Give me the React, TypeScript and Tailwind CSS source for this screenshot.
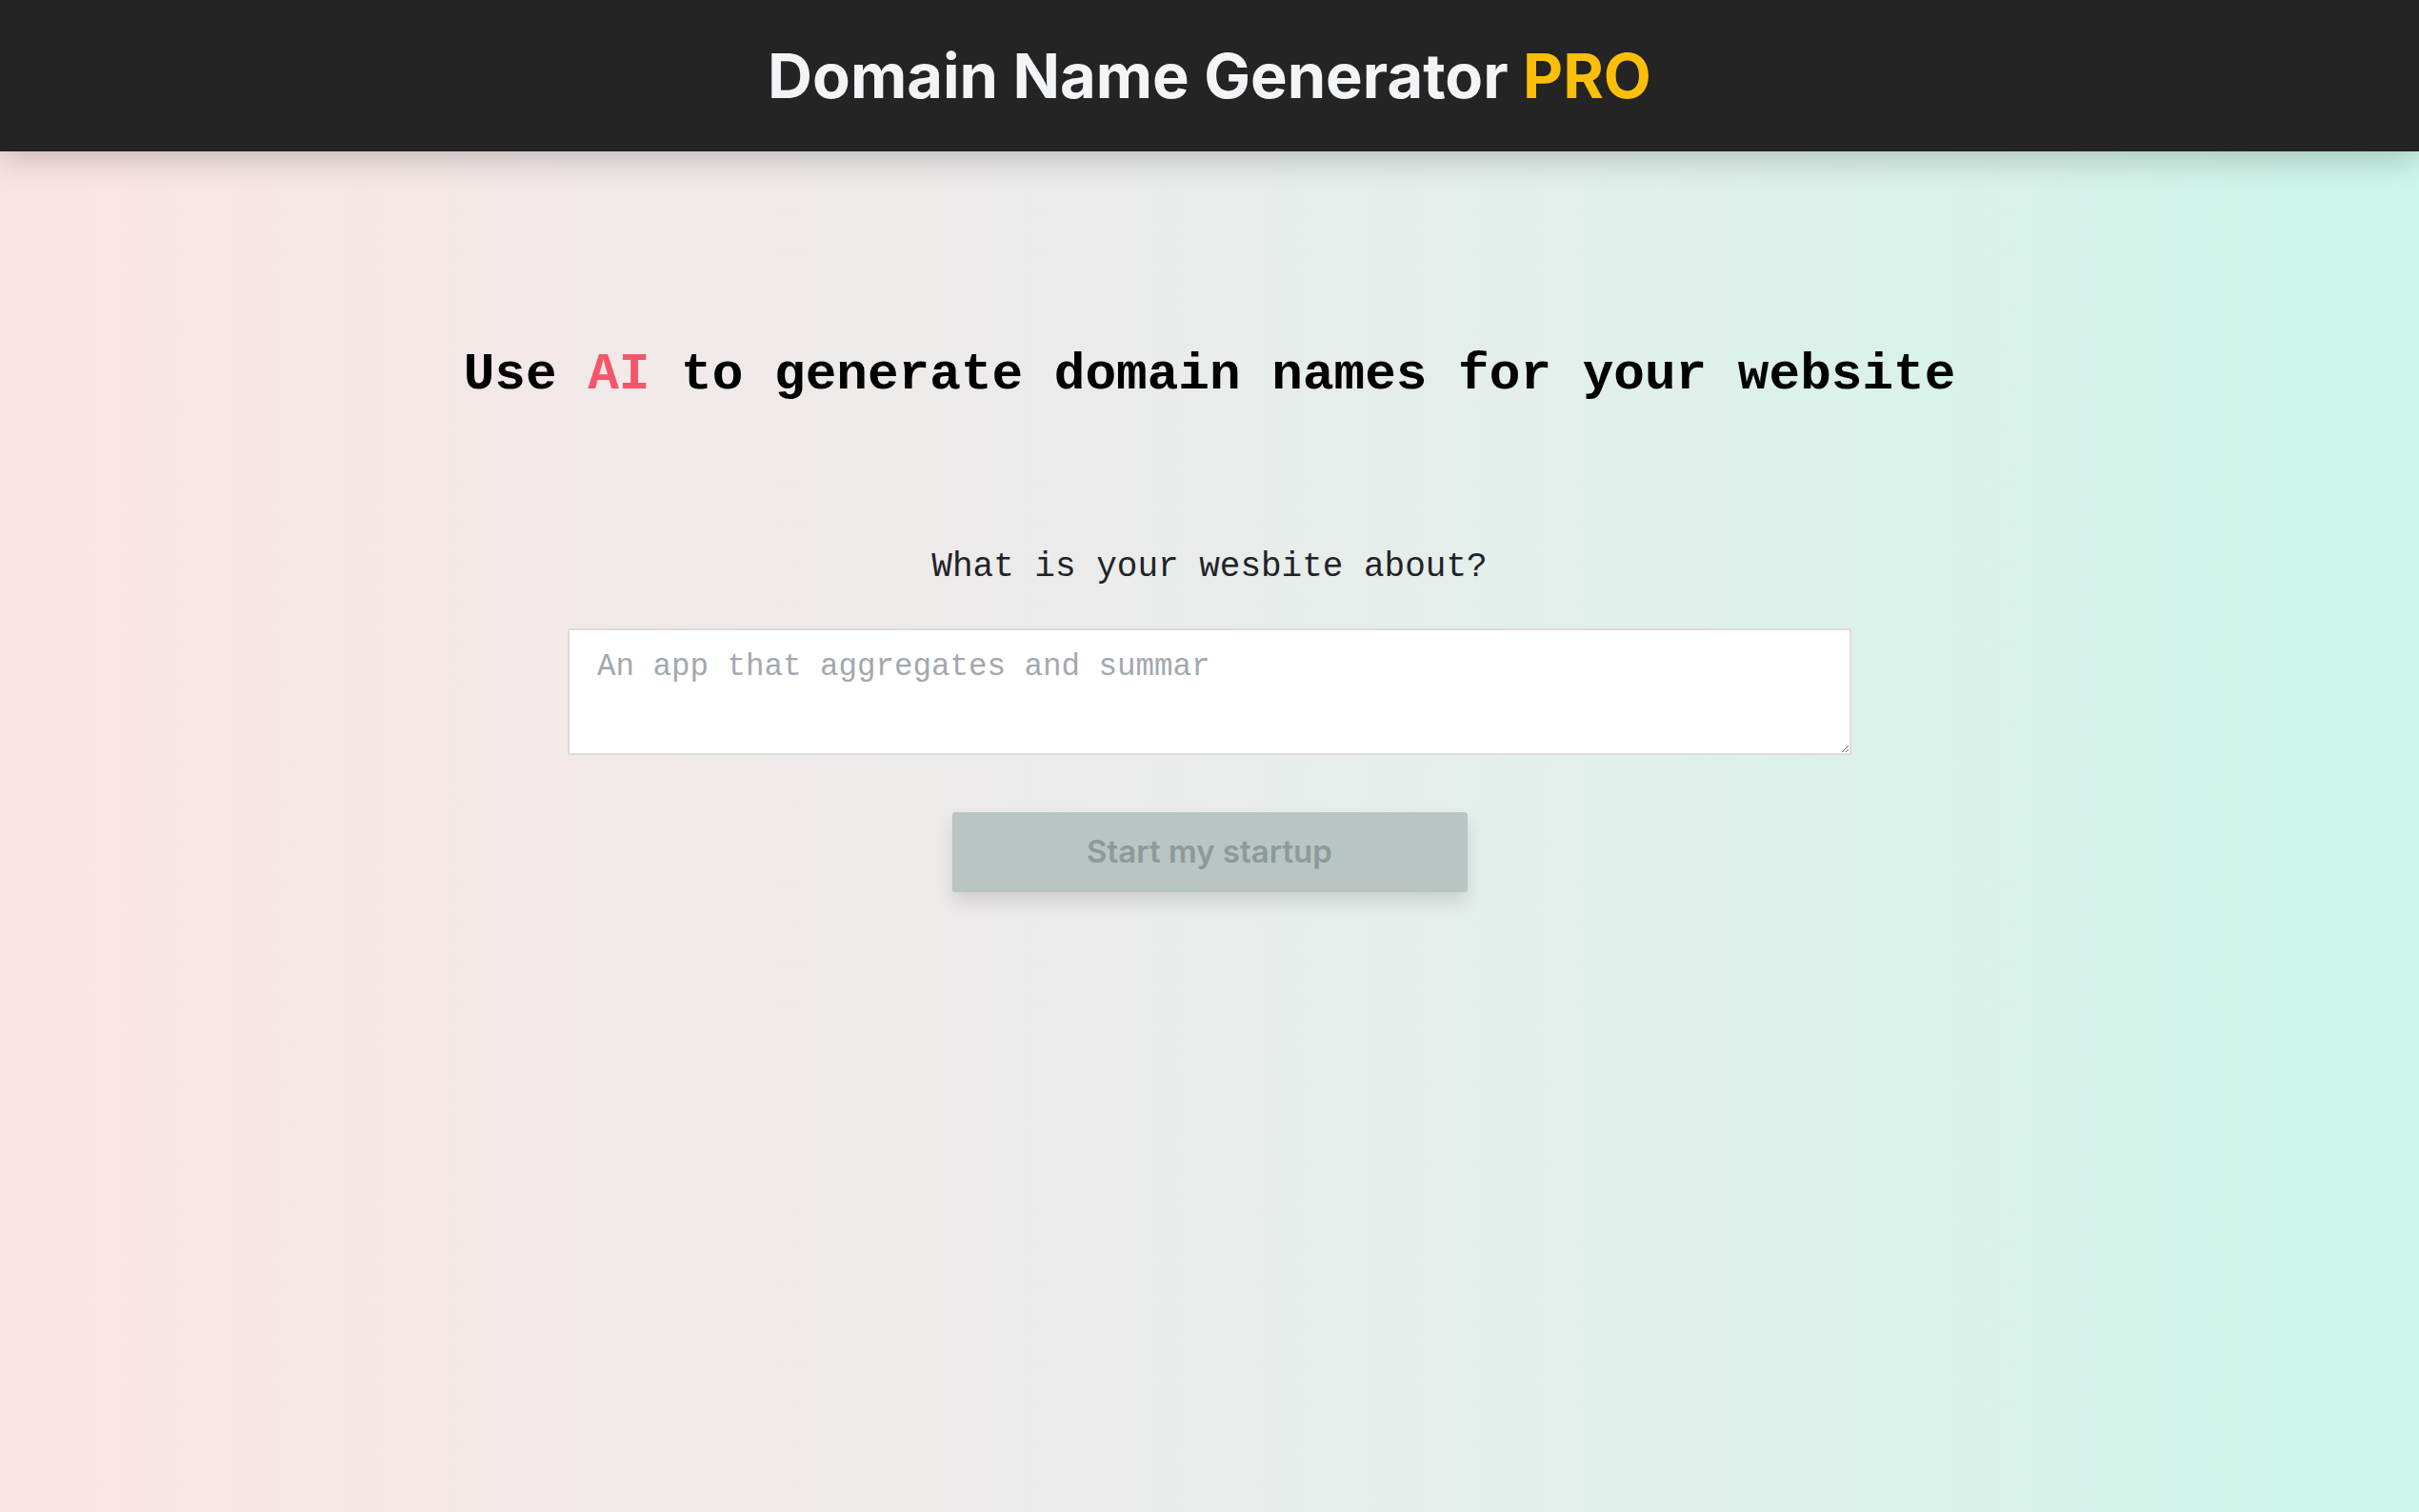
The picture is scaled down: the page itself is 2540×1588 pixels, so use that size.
export default function App() {
  return (
    <div className="min-h-screen flex flex-col bg-[linear-gradient(to_right,#fce3e3_0%,#f1e9e8_25%,#ebebeb_45%,#e2efea_65%,#cdf6ea_100%)]">
      {/* Header */}
      <header className="h-[159px] bg-[#242424] flex items-center justify-center shadow-[0_8px_32px_rgba(0,0,0,0.2)] relative z-10">
        <h1 className="text-[65px] font-bold text-[#f3f4f6] font-['Inter','Liberation_Sans',sans-serif]">
          Domain Name Generator <span className="text-[#fbbf0a]">PRO</span>
        </h1>
      </header>

      <main className="flex flex-col items-center pt-[203px]">
        <h2 className="text-[54.4px] leading-[64px] font-bold text-black font-['Liberation_Mono',monospace]">
          Use <span className="text-[#f4566b]">AI</span> to generate domain names for your website
        </h2>

        <label className="mt-[148px] text-[36px] leading-[44px] text-[#1f2328] font-['Liberation_Mono',monospace]">
          What is your wesbite about?
        </label>

        <textarea
          className="mt-[42px] w-[1348px] h-[133px] bg-white border-2 border-[#dcdcdc] px-[29px] py-[17px] text-[32.5px] leading-[44px] text-gray-800 placeholder:text-[#a3a8ae] font-['Liberation_Mono',monospace] outline-none"
          placeholder="An app that aggregates and summar"
        />

        <button
          disabled
          className="mt-[60px] w-[541px] h-[84px] rounded-[3px] bg-[#b8c5c3] text-[#8e9998] text-[33px] font-semibold font-['Inter','Liberation_Sans',sans-serif] shadow-[0_10px_18px_rgba(0,0,0,0.12)]"
        >
          Start my startup
        </button>
      </main>
    </div>
  );
}
